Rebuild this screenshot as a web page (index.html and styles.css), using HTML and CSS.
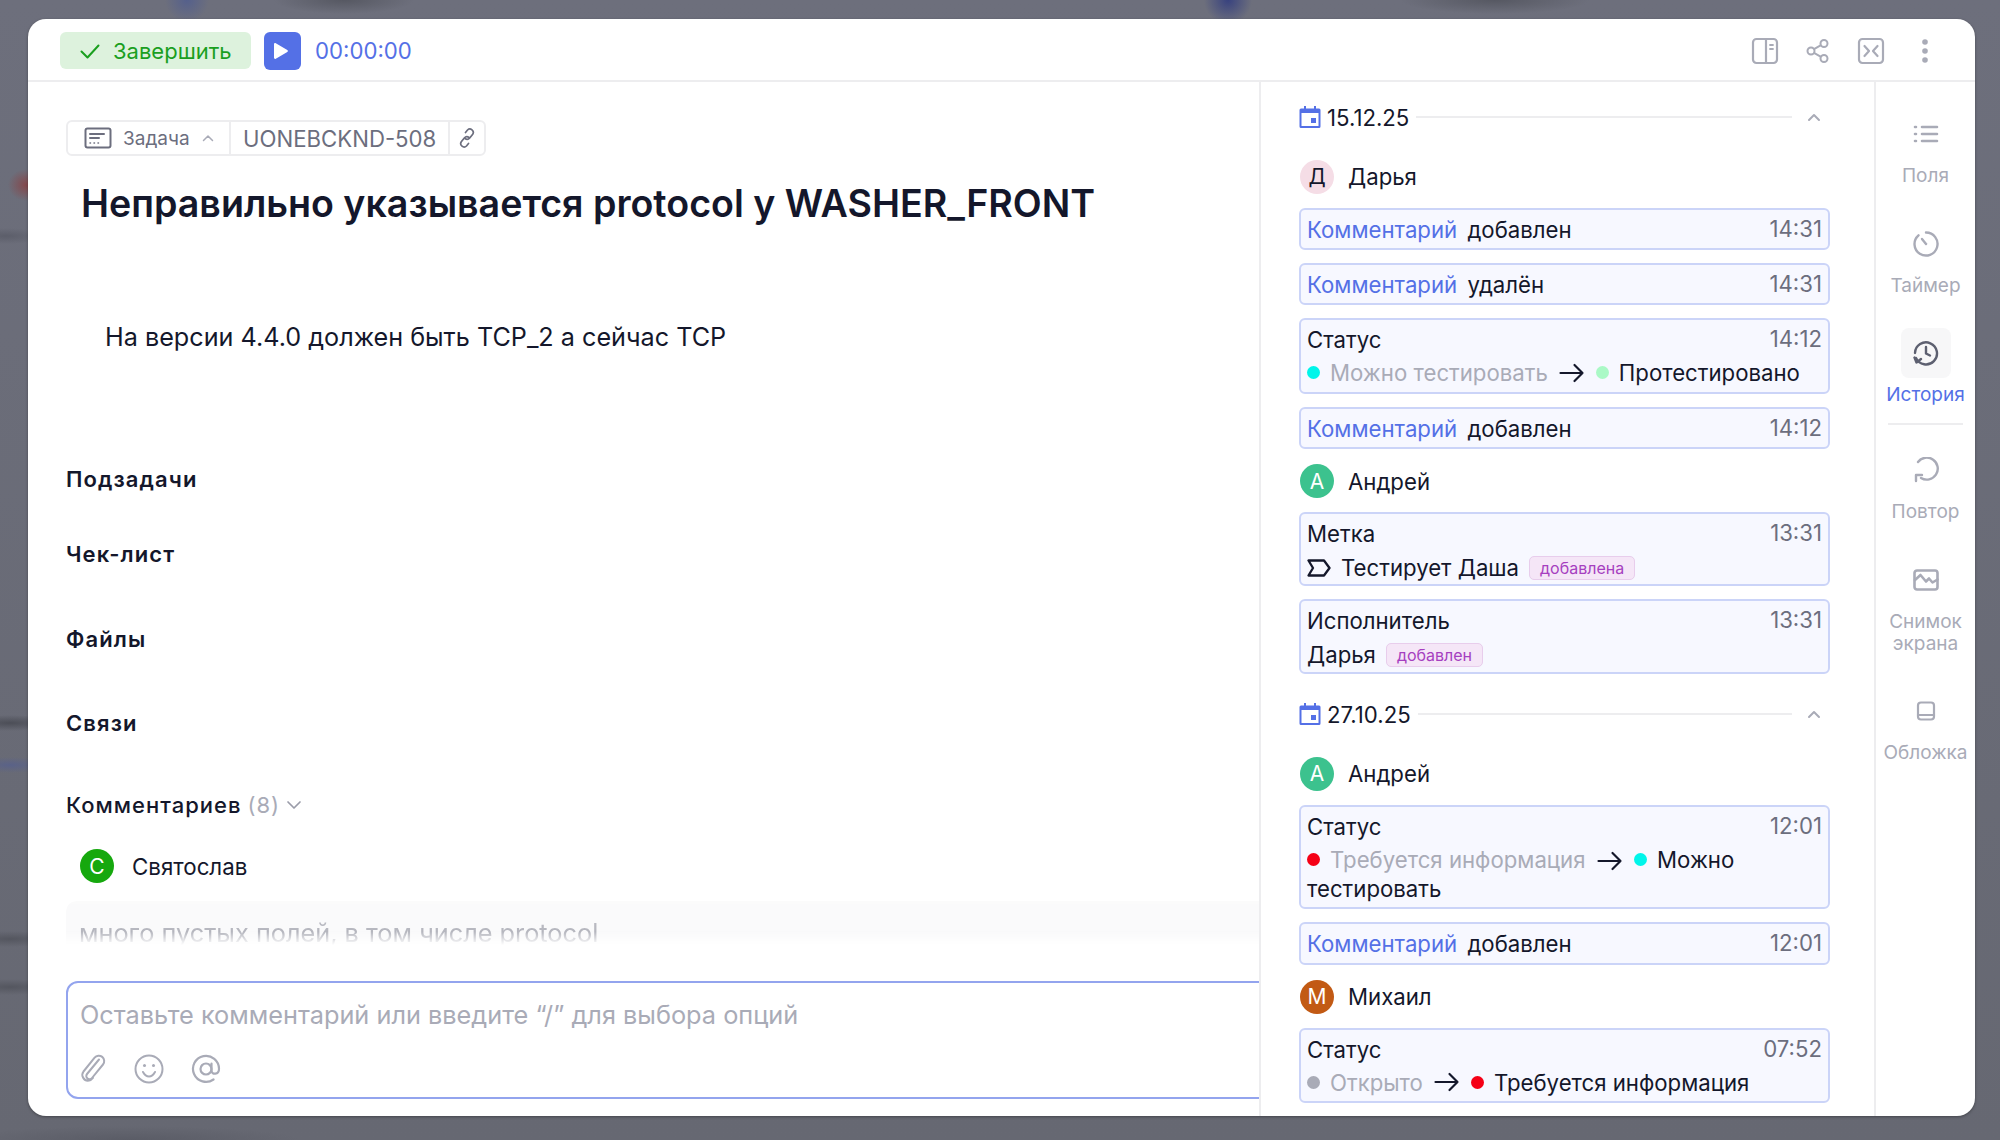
FILE: index.html
```html
<!DOCTYPE html>
<html lang="ru">
<head>
  <meta charset="UTF-8">
  <meta name="viewport" content="width=device-width, initial-scale=1.0">
  <title>UONEBCKND-508</title>
  <link rel="stylesheet" href="styles.css">
</head>
<body>
  <div class="backdrop">
    <div class="modal">
      <header class="topbar">
        <button class="finish-btn">
          <svg width="24" height="24" viewBox="0 0 24 24" fill="none" stroke="#1a9f1f" stroke-width="2" stroke-linecap="round" stroke-linejoin="round"><path d="M3.5 12.5l6 6L20.5 6.5"/></svg>
          Завершить
        </button>
        <button class="play-btn">
          <svg width="16" height="18" viewBox="0 0 16 18"><path d="M1 2.200c0-1 1-1.500 1.800-1l11.500 6.800c.8.500.8 1.500 0 2L2.800 16.800c-.8.500-1.800 0-1.800-1z" fill="#fff"/></svg>
        </button>
        <span class="timer">00:00:00</span>
        <div class="topbar-actions">
          <svg width="28" height="28" viewBox="0 0 28 28" fill="none" stroke="#a9abb7" stroke-width="2.2" stroke-linecap="round"><rect x="2" y="2" width="24" height="24" rx="3.5"/><path d="M15 2v24"/><path d="M19 8h3M19 12h3" stroke-width="1.8"/></svg>
          <svg width="24" height="26" viewBox="0 0 24 26" fill="none" stroke="#a9abb7" stroke-width="2"><circle cx="5" cy="13" r="3.5"/><circle cx="18" cy="5.5" r="3.5"/><circle cx="18" cy="20.5" r="3.5"/><path d="M8 11.200l7-4M8 14.800l7 4"/></svg>
          <svg width="28" height="28" viewBox="0 0 28 28" fill="none" stroke="#a9abb7" stroke-width="2.2" stroke-linecap="round" stroke-linejoin="round"><rect x="2" y="2" width="24" height="24" rx="3.5"/><path d="M7.500 9l4.500 5-4.500 5M20.500 9L16 14l4.500 5"/></svg>
          <svg class="more-icon" width="10" height="26" viewBox="0 0 10 26" fill="#a9abb7"><circle cx="5" cy="4" r="2.8"/><circle cx="5" cy="13" r="2.8"/><circle cx="5" cy="22" r="2.8"/></svg>
        </div>
      </header>

      <div class="content">
        <main class="task">
          <div class="task-tag">
            <div class="tag-part tag-type">
              <svg width="28" height="22" viewBox="0 0 28 22" fill="none" stroke="#6c6e7e" stroke-width="2" stroke-linecap="round"><rect x="1.5" y="1.5" width="25" height="19" rx="2"/><path d="M6 7h14M6 11h9"/><path d="M6 16h.5M10 16h.5M14 16h.5" stroke-width="1.5"/></svg>
              <span>Задача</span>
              <svg width="12" height="8" viewBox="0 0 12 8" fill="none" stroke="#a9abb7" stroke-width="1.5" stroke-linecap="round" stroke-linejoin="round"><path d="M1.500 6.500L6 2l4.500 4.500"/></svg>
            </div>
            <div class="tag-part tag-key">UONEBCKND-508</div>
            <div class="tag-part tag-link">
              <svg width="20" height="22" viewBox="0 0 20 22" fill="none" stroke="#6c6e7e" stroke-width="1.7" stroke-linecap="round"><path d="M8.500 5.500l2-2.500a3.400 3.400 0 0 1 5.200 4.300l-3 3.700a3.400 3.400 0 0 1-4.700.5"/><path d="M11.500 16.500l-2 2.500a3.400 3.400 0 0 1-5.200-4.300l3-3.700a3.400 3.400 0 0 1 4.700-.5"/></svg>
            </div>
          </div>

          <h1 class="task-title">Неправильно указывается protocol у WASHER_FRONT</h1>
          <p class="task-desc">На версии 4.4.0 должен быть TCP_2 а сейчас TCP</p>

          <h2 class="section-label label-sub">Подзадачи</h2>
          <h2 class="section-label label-check">Чек-лист</h2>
          <h2 class="section-label label-files">Файлы</h2>
          <h2 class="section-label label-links">Связи</h2>
          <h2 class="section-label label-comments">
            Комментариев <span class="count">(8)</span>
            <svg width="16" height="10" viewBox="0 0 16 10" fill="none" stroke="#9a9ca9" stroke-width="1.7" stroke-linecap="round" stroke-linejoin="round"><path d="M2 2l6 6 6-6"/></svg>
          </h2>

          <div class="comment-head">
            <span class="avatar avatar-green">С</span>
            <span class="comment-author">Святослав</span>
          </div>
          <div class="comment-body">много пустых полей, в том числе protocol</div>

          <div class="editor">
            <div class="editor-text">Оставьте комментарий или введите “/” для выбора опций</div>
            <div class="editor-tools">
              <svg width="28" height="30" viewBox="0 0 28 30" fill="none" stroke="#a9abb7" stroke-width="2" stroke-linecap="round" stroke-linejoin="round"><path d="M20 5.500L8 20a3.200 3.200 0 0 0 5 4L24 10.500a5.400 5.400 0 0 0-8.400-6.800L4.500 17.500c-3 4 .5 10 5.500 9 2-.4 3-1.500 4-2.700"/></svg>
              <svg width="30" height="30" viewBox="0 0 30 30" fill="none" stroke="#a9abb7" stroke-width="2" stroke-linecap="round"><circle cx="15" cy="15" r="13.5"/><path d="M9 18c1.500 2.800 3.800 4.500 6 4.500s4.500-1.700 6-4.500"/><circle cx="10.5" cy="11.5" r="1.5" fill="#a9abb7" stroke="none"/><circle cx="19.5" cy="11.5" r="1.5" fill="#a9abb7" stroke="none"/></svg>
              <svg width="30" height="30" viewBox="0 0 30 30" fill="none" stroke="#a9abb7" stroke-width="2.2" stroke-linecap="round"><circle cx="15" cy="15" r="5.5"/><path d="M20.500 9.500v7c0 4.500 7.500 4.500 7.500-1.500a13 13 0 1 0-5.500 10.500"/></svg>
            </div>
          </div>
        </main>

        <section class="history">
          <div class="date-row">
            <svg class="cal-icon" width="22" height="22" viewBox="0 0 22 22"><path d="M5 0h2v2.500h8V0h2v2.500h3a1.500 1.500 0 0 1 1.500 1.500v16.500A1.500 1.500 0 0 1 20 22H2A1.500 1.500 0 0 1 .5 20.500V4A1.500 1.500 0 0 1 2 2.500h3z" fill="#5470e6"/><rect x="2.5" y="7" width="17" height="13" fill="#fff"/><rect x="12" y="12" width="5" height="5" fill="#5470e6"/></svg>
            <span class="date-text">15.12.25</span>
            <span class="date-line"></span>
            <svg width="14" height="10" viewBox="0 0 14 10" fill="none" stroke="#a9abb7" stroke-width="2" stroke-linecap="round" stroke-linejoin="round"><path d="M2 8l5-5 5 5"/></svg>
          </div>

          <div class="user-row"><span class="avatar avatar-pink">Д</span>Дарья</div>
          <div class="card"><div class="card-top"><span><a class="card-link">Комментарий</a> добавлен</span><time>14:31</time></div></div>
          <div class="card"><div class="card-top"><span><a class="card-link">Комментарий</a> удалён</span><time>14:31</time></div></div>
          <div class="card">
            <div class="card-top"><span>Статус</span><time>14:12</time></div>
            <div class="card-line">
              <i class="dot dot-cyan"></i><span class="muted">Можно тестировать</span>
              <svg class="arrow" width="26" height="20" viewBox="0 0 26 20" fill="none" stroke="#14172b" stroke-width="2.2" stroke-linecap="round" stroke-linejoin="round"><path d="M1.500 10h22M15.500 2l8 8-8 8"/></svg>
              <i class="dot dot-mint"></i>Протестировано
            </div>
          </div>
          <div class="card"><div class="card-top"><span><a class="card-link">Комментарий</a> добавлен</span><time>14:12</time></div></div>

          <div class="user-row"><span class="avatar avatar-teal">А</span>Андрей</div>
          <div class="card">
            <div class="card-top"><span>Метка</span><time>13:31</time></div>
            <div class="card-line card-line-tag">
              <svg class="label-icon" width="24" height="18" viewBox="0 0 24 18" fill="none" stroke="#14172b" stroke-width="2.3" stroke-linejoin="round"><path d="M1.500 1.500h15.500l5.500 7.500-5.500 7.500H1.500L6 9z"/></svg>
              Тестирует Даша <span class="badge">добавлена</span>
            </div>
          </div>
          <div class="card">
            <div class="card-top"><span>Исполнитель</span><time>13:31</time></div>
            <div class="card-line card-line-tag">Дарья <span class="badge">добавлен</span></div>
          </div>

          <div class="date-row date-row-second">
            <svg class="cal-icon" width="22" height="22" viewBox="0 0 22 22"><path d="M5 0h2v2.500h8V0h2v2.500h3a1.500 1.500 0 0 1 1.500 1.500v16.500A1.500 1.500 0 0 1 20 22H2A1.500 1.500 0 0 1 .5 20.500V4A1.500 1.500 0 0 1 2 2.500h3z" fill="#5470e6"/><rect x="2.5" y="7" width="17" height="13" fill="#fff"/><rect x="12" y="12" width="5" height="5" fill="#5470e6"/></svg>
            <span class="date-text">27.10.25</span>
            <span class="date-line"></span>
            <svg width="14" height="10" viewBox="0 0 14 10" fill="none" stroke="#a9abb7" stroke-width="2" stroke-linecap="round" stroke-linejoin="round"><path d="M2 8l5-5 5 5"/></svg>
          </div>

          <div class="user-row"><span class="avatar avatar-teal">А</span>Андрей</div>
          <div class="card">
            <div class="card-top"><span>Статус</span><time>12:01</time></div>
            <div class="card-line card-line-wrap">
              <i class="dot dot-red"></i><span class="muted">Требуется информация</span>
              <svg class="arrow" width="26" height="20" viewBox="0 0 26 20" fill="none" stroke="#14172b" stroke-width="2.2" stroke-linecap="round" stroke-linejoin="round"><path d="M1.500 10h22M15.500 2l8 8-8 8"/></svg>
              <i class="dot dot-cyan"></i>Можно тестировать
            </div>
          </div>
          <div class="card"><div class="card-top"><span><a class="card-link">Комментарий</a> добавлен</span><time>12:01</time></div></div>

          <div class="user-row"><span class="avatar avatar-brown">М</span>Михаил</div>
          <div class="card">
            <div class="card-top"><span>Статус</span><time>07:52</time></div>
            <div class="card-line">
              <i class="dot dot-gray"></i><span class="muted">Открыто</span>
              <svg class="arrow" width="26" height="20" viewBox="0 0 26 20" fill="none" stroke="#14172b" stroke-width="2.2" stroke-linecap="round" stroke-linejoin="round"><path d="M1.500 10h22M15.500 2l8 8-8 8"/></svg>
              <i class="dot dot-red"></i>Требуется информация
            </div>
          </div>
          <div class="card card-cut"></div>
        </section>

        <nav class="sidebar">
          <div class="side-item">
            <div class="side-icon"><svg width="26" height="20" viewBox="0 0 26 20" fill="none" stroke="#a9abb7" stroke-width="2.6" stroke-linecap="round"><path d="M9 3h15M9 10h15M9 17h15M2 3h1M2 10h1M2 17h1"/></svg></div>
            <span>Поля</span>
          </div>
          <div class="side-item">
            <div class="side-icon"><svg width="26" height="26" viewBox="0 0 26 26" fill="none" stroke="#a9abb7" stroke-width="2.4" stroke-linecap="round"><path d="M13 1.500a11.500 11.500 0 1 1-7.500 2.800"/><path d="M9 8l4 5"/></svg></div>
            <span>Таймер</span>
          </div>
          <div class="side-item side-item-active">
            <div class="side-icon"><svg width="26" height="26" viewBox="0 0 26 26" fill="none" stroke="#5d6070" stroke-width="2.4" stroke-linecap="round" stroke-linejoin="round"><path d="M3 18a11 11 0 1 0-1-5"/><path d="M1.500 17.500l2 5 4.500-3.500"/><path d="M13 7v6.500l4 2"/></svg></div>
            <span>История</span>
          </div>
          <div class="side-item">
            <div class="side-icon"><svg width="26" height="26" viewBox="0 0 26 26" fill="none" stroke="#a9abb7" stroke-width="2.4" stroke-linecap="round" stroke-linejoin="round"><path d="M5 5a11 11 0 1 1 3 16"/><path d="M3 24v-6h6"/></svg></div>
            <span>Повтор</span>
          </div>
          <div class="side-item">
            <div class="side-icon"><svg width="26" height="22" viewBox="0 0 26 22" fill="none" stroke="#a9abb7" stroke-width="2.6" stroke-linecap="round" stroke-linejoin="round"><rect x="1.5" y="1.5" width="23" height="19" rx="2.5"/><path d="M2 11l5.500-5 5.500 6.500 3-3 3.500 4 5-3"/></svg></div>
            <span>Снимок экрана</span>
          </div>
          <div class="side-item">
            <div class="side-icon"><svg width="20" height="20" viewBox="0 0 20 20" fill="none" stroke="#a9abb7" stroke-width="2.2" stroke-linecap="round"><rect x="2" y="1.5" width="16" height="17" rx="3"/><path d="M2 14h16"/></svg></div>
            <span>Обложка</span>
          </div>
        </nav>
      </div>
    </div>
  </div>
</body>
</html>
```

FILE: styles.css
```css
* {
  box-sizing: border-box;
}
html, body {
  margin: 0;
  height: 100%;
}
body {
  font-family: Inter, "Noto Sans", sans-serif;
  font-size: 21px;
  color: #14172b;
  background: #696b78;
  overflow: hidden;
}
svg {
  display: block;
  flex: none;
}
button {
  border: 0;
  font: inherit;
  cursor: pointer;
}

/* размытый фон за окном */
.backdrop {
  height: 1140px;
  padding: 19px 25px 24px 28px;
  background:
    radial-gradient(ellipse 22px 22px at 187px 0, #55608c, transparent),
    radial-gradient(ellipse 70px 14px at 344px 0, #565862, transparent),
    radial-gradient(ellipse 24px 24px at 1228px 0, #38427f, transparent),
    radial-gradient(ellipse 95px 14px at 1495px 0, #565862, transparent),
    radial-gradient(ellipse 18px 16px at 26px 185px, #84484c, transparent),
    radial-gradient(ellipse 40px 8px at 6px 236px, #5c5e6a, transparent),
    radial-gradient(ellipse 50px 8px at 10px 723px, #4c4e57, transparent),
    radial-gradient(ellipse 40px 8px at 10px 765px, #5a6288, transparent),
    radial-gradient(ellipse 50px 8px at 10px 939px, #54565f, transparent),
    radial-gradient(ellipse 50px 8px at 10px 987px, #54565f, transparent),
    radial-gradient(ellipse 170px 14px at 130px 1140px, #5a5c66, transparent),
    linear-gradient(#6d6f7c, #666872);
}
.modal {
  height: 1097px;
  display: flex;
  flex-direction: column;
  background: #fff;
  border-radius: 18px;
  overflow: hidden;
  box-shadow: 0 1px 3px rgba(0, 0, 0, 0.35);
}

/* верхняя панель */
.topbar {
  height: 63px;
  flex: none;
  display: flex;
  align-items: center;
  padding: 2px 45px 0 32px;
  border-bottom: 2px solid #ededef;
}
.finish-btn {
  width: 191px;
  height: 37px;
  display: flex;
  align-items: center;
  gap: 11px;
  padding: 0 0 0 18px;
  background: #ddf2dd;
  border-radius: 6px;
  color: #1a9f1f;
  font-size: 22px;
}
.play-btn {
  width: 37px;
  height: 38px;
  margin-left: 13px;
  display: flex;
  align-items: center;
  justify-content: center;
  background: #5470e6;
  border-radius: 6px;
  padding-left: 3px;
}
.timer {
  margin-left: 14px;
  color: #5470e6;
  font-size: 22.2px;
}
.topbar-actions {
  margin-left: auto;
  display: flex;
  align-items: center;
  gap: 27px;
}
.more-icon {
  margin-left: 8px;
}

.content {
  flex: 1;
  min-height: 0;
  display: flex;
}

/* левая колонка */
.task {
  flex: 1;
  min-width: 0;
  padding: 38px 0 0 38px;
  overflow: hidden;
}
.task-tag {
  display: inline-flex;
  height: 36px;
  border: 2px solid #ededef;
  border-radius: 6px;
  color: #6c6e7e;
}
.tag-part {
  display: flex;
  align-items: center;
  border-left: 2px solid #ededef;
}
.tag-part:first-child {
  border-left: 0;
}
.tag-type {
  width: 161px;
  padding-left: 16px;
  gap: 11px;
  font-size: 19px;
}
.tag-type svg:last-child {
  margin-left: 1px;
}
.tag-key {
  padding: 0 12px;
  font-size: 22.2px;
}
.tag-link {
  width: 36px;
  justify-content: center;
}
.task-title {
  margin: 24px 0 0 15px;
  font-size: 37.6px;
  line-height: 48px;
  font-weight: 600;
}
.task-desc {
  margin: 94px 0 0 39px;
  line-height: 30px;
  font-size: 25.2px;
}
.section-label {
  margin: 0;
  font-size: 22px;
  line-height: 26px;
  font-weight: 600;
  letter-spacing: 1.1px;
}
.label-sub { margin-top: 114px; }
.label-check { margin-top: 49px; }
.label-files { margin-top: 59px; }
.label-links { margin-top: 58px; }
.label-comments {
  margin-top: 55.5px;
  display: flex;
  align-items: center;
  gap: 6px;
  font-weight: 500;
  letter-spacing: 1px;
}
.label-comments .count {
  color: #a9abb7;
  font-weight: 400;
}
.comment-head {
  margin: 31.5px 0 0 14px;
  display: flex;
  align-items: center;
  gap: 18px;
}
.comment-author {
  font-size: 22.3px;
}
.comment-body {
  height: 44px;
  margin: 18px 0 0 0;
  padding: 17px 13px 0;
  overflow: hidden;
  background: #f4f4f6;
  border-radius: 10px 0 0 0;
  color: #6c6e7e;
  font-size: 25.3px;
  line-height: 30px;
  mask-image: linear-gradient(to bottom, rgba(0, 0, 0, 0.4), rgba(0, 0, 0, 0.5) 70%, transparent);
}
.editor {
  height: 118px;
  margin: 36px -20px 0 0;
  padding: 17px 12px 0;
  border: 2px solid #93a4ee;
  border-radius: 12px;
}
.editor-text {
  color: #a9abb7;
  font-size: 25.3px;
  line-height: 30px;
}
.editor-tools {
  margin: 24px 0 0 -1px;
  display: flex;
  gap: 27px;
}

/* история */
.history {
  width: 615px;
  flex: none;
  padding: 23px 44px 0 38px;
  border-left: 2px solid #ededef;
  overflow: hidden;
}
.date-row {
  height: 24px;
  display: flex;
  align-items: center;
  padding-right: 9px;
  font-size: 22.2px;
}
.date-row > svg:last-child {
  margin-left: 15px;
}
.date-text {
  margin-left: 6px;
}
.date-line {
  flex: 1;
  height: 2px;
  margin-left: 7px;
  background: #ededef;
}
.date-row-second {
  margin-top: 28.5px;
}
.user-row {
  height: 34px;
  margin: 29px 0 14px 1px;
  display: flex;
  align-items: center;
  gap: 14px;
  font-size: 22.2px;
}
.card + .user-row {
  margin-top: 15px;
}
.date-row + .user-row {
  margin-top: 30.5px;
}
.avatar {
  width: 34px;
  height: 34px;
  flex: none;
  border-radius: 50%;
  display: flex;
  align-items: center;
  justify-content: center;
  font-size: 21px;
  color: #fff;
}
.avatar-green { background: #16a80e; }
.avatar-pink { background: #f5dde6; color: #14172b; }
.avatar-teal { background: #3cc28e; }
.avatar-brown { background: #c25a14; }

.card {
  margin-bottom: 13px;
  padding: 5px 6px 4.4px;
  background: #f7f8ff;
  border: 2px solid #cbd4f8;
  border-radius: 6px;
  font-size: 22.2px;
  line-height: 29px;
}
.card-top {
  display: flex;
  justify-content: space-between;
}
.card-top time {
  color: #6c6e7e;
  margin-top: -1px;
}
.card-link {
  color: #5470e6;
  margin-right: 4px;
}
.card-line {
  display: flex;
  align-items: center;
  margin-top: 4px;
}
.card-line-tag {
  margin-top: 5px;
  margin-bottom: -2px;
}
.card-line-wrap {
  display: block;
  margin-top: 4px;
}
.card-line-wrap .dot {
  display: inline-block;
  vertical-align: 2px;
}
.card-line-wrap .arrow {
  display: inline-block;
  vertical-align: -3px;
  margin: 0 5px;
}
.muted {
  color: #a9abb7;
}
.dot {
  width: 13px;
  height: 13px;
  flex: none;
  margin-right: 10px;
  border-radius: 50%;
}
.dot-cyan { background: #00f5ea; }
.dot-mint { background: #aaf9c6; }
.dot-red { background: #f50016; }
.dot-gray { background: #a9abb7; }
.arrow {
  margin: 0 11px;
}
.label-icon {
  margin-right: 10px;
}
.badge {
  height: 24px;
  margin-left: 10px;
  padding: 0 10px;
  display: inline-flex;
  align-items: center;
  background: #f5e6f7;
  border: 1px solid #e8cdec;
  border-radius: 5px;
  color: #a63fc0;
  font-size: 16px;
  line-height: 1;
}
.card-cut {
  height: 40px;
}

/* боковая панель */
.sidebar {
  width: 101px;
  flex: none;
  padding-top: 27px;
  border-left: 2px solid #ededef;
  display: flex;
  flex-direction: column;
  align-items: center;
  color: #a9abb7;
  font-size: 19px;
  line-height: 22px;
  text-align: center;
}
.side-item {
  display: flex;
  flex-direction: column;
  align-items: center;
  margin-bottom: 31.5px;
  width: 100%;
}
.side-icon {
  width: 50px;
  height: 50px;
  display: flex;
  align-items: center;
  justify-content: center;
  border-radius: 8px;
  margin-bottom: 6px;
}
.side-item-active {
  color: #5470e6;
  position: relative;
  padding-bottom: 19px;
  margin-bottom: 20px;
}
.side-item-active::after {
  content: "";
  position: absolute;
  left: 12px;
  right: 12px;
  bottom: 0;
  height: 2px;
  background: #ededef;
}
.side-item-active .side-icon {
  background: #f7f7f8;
}
```
